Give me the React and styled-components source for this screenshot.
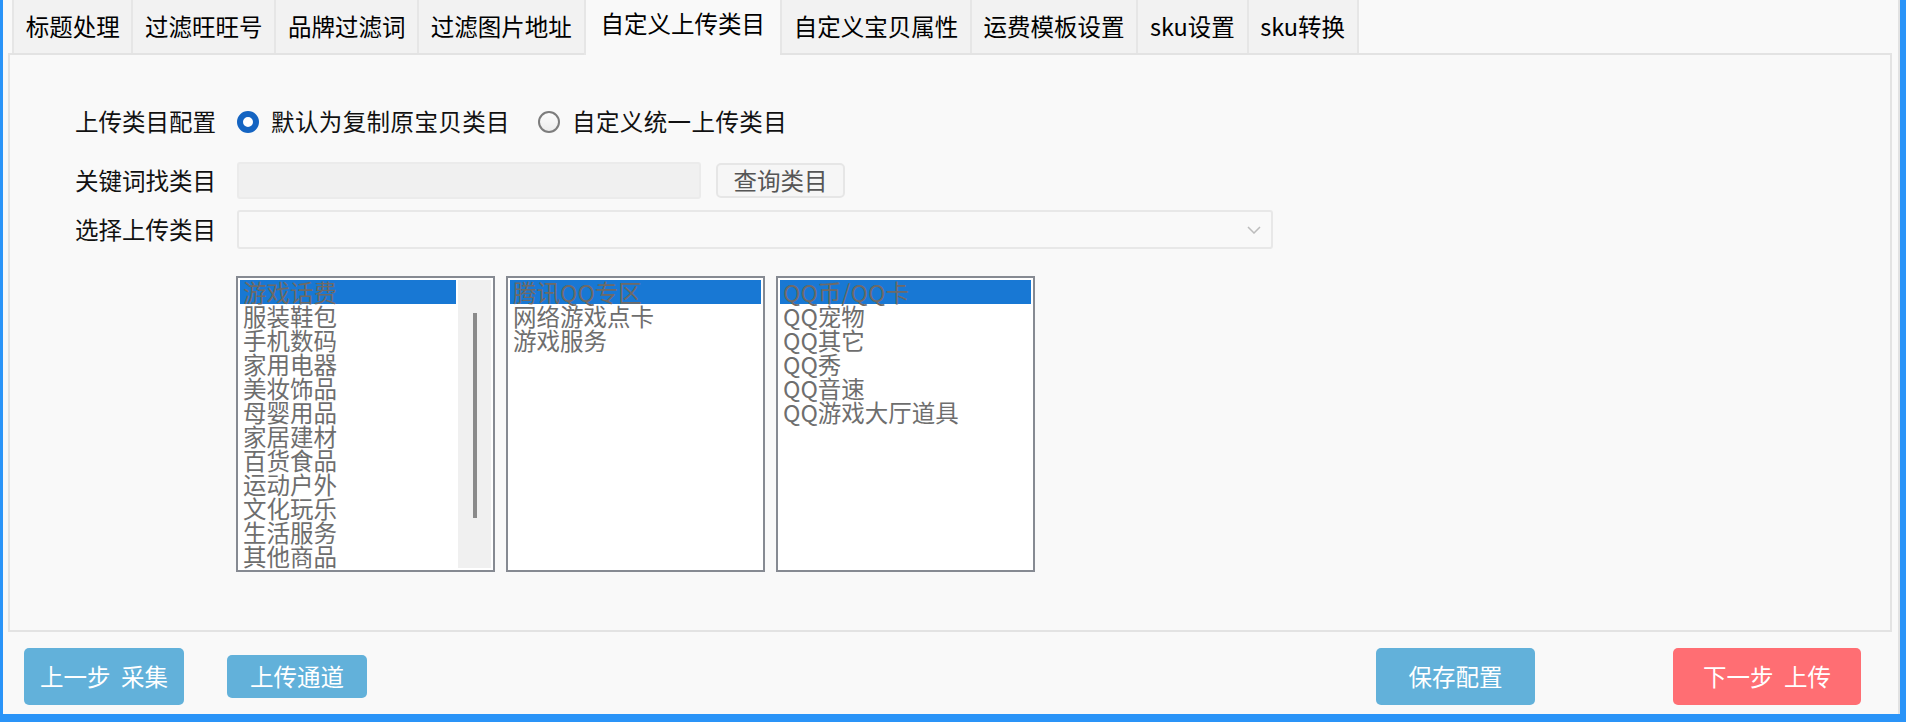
import React from 'react';
import styled, { createGlobalStyle } from 'styled-components';

const GlobalStyle = createGlobalStyle`
  html, body {
    margin: 0;
    padding: 0;
    background: #f9f9f9;
  }
  * {
    box-sizing: border-box;
  }
`;

const tabs = ['标题处理', '过滤旺旺号', '品牌过滤词', '过滤图片地址', '自定义上传类目', '自定义宝贝属性', '运费模板设置', 'sku设置', 'sku转换'];

const lists = [
  { items: ['游戏话费', '服装鞋包', '手机数码', '家用电器', '美妆饰品', '母婴用品', '家居建材', '百货食品', '运动户外', '文化玩乐', '生活服务', '其他商品'], scroll: true },
  { items: ['腾讯QQ专区', '网络游戏点卡', '游戏服务'] },
  { items: ['QQ币/QQ卡', 'QQ宠物', 'QQ其它', 'QQ秀', 'QQ音速', 'QQ游戏大厅道具'] },
];

const Frame = styled.div`
  width: 1906px;
  height: 722px;
  border-left: 3px solid #2a94f8;
  border-right: 6px solid #2a94f8;
  border-bottom: 8px solid #2a94f8;
  background: #f9f9f9;
  font-family: "Noto Sans CJK SC", "Noto Sans", sans-serif;
  font-size: 23.5px;
  color: #111;
`;

const Inner = styled.div`
  height: 100%;
  border-right: 2px solid #e2e2e2;
  display: flex;
  flex-direction: column;
`;

const TabArea = styled.div`
  margin: 0 6px 0 5px;
  display: flex;
  flex-direction: column;
`;

const TabBar = styled.div`
  display: flex;
  align-items: flex-start;
  height: 55px;
  padding-left: 4px;
  border-bottom: 2px solid #e3e3e3;
`;

const Tab = styled.div`
  height: ${p => (p.$active ? '55px' : '53px')};
  padding: 0 ${p => (p.$active ? '15px' : '11.7px')} ${p => (p.$active ? '7px' : '0')};
  display: flex;
  align-items: center;
  background: ${p => (p.$active ? '#f9f9f9' : '#f2f2f2')};
  border-left: 2px solid #e6e6e6;
  white-space: nowrap;
  line-height: 1;
  color: #000;

  &:last-child {
    border-right: 2px solid #e6e6e6;
  }
`;

const Panel = styled.div`
  height: 577px;
  border: 2px solid #e3e3e3;
  border-top: none;
  padding: 52px 0 0 65px;
  display: flex;
  flex-direction: column;
`;

const Row = styled.div`
  display: flex;
  align-items: center;
  height: ${p => p.$h}px;
  margin-bottom: ${p => p.$gap}px;
`;

const Label = styled.div`
  width: 162px;
  flex-shrink: 0;
  line-height: 1;
  color: #111;
`;

const RadioOption = styled.label`
  display: flex;
  align-items: center;
  gap: 12px;
  margin-right: 28px;
  line-height: 1;
  letter-spacing: 0.4px;
`;

const RadioDot = styled.span`
  width: 22px;
  height: 22px;
  border-radius: 50%;
  background: ${p => (p.$on ? '#fff' : 'linear-gradient(#fdfdfd, #ececec)')};
  border: ${p => (p.$on ? '6px solid #1464c2' : '2px solid #7d7d7d')};
`;

const TextInput = styled.div`
  width: 464px;
  height: 37px;
  background: #f0f0f0;
  border: 2px solid #ebebeb;
  border-radius: 3px;
`;

const GreyButton = styled.div`
  margin-left: 15px;
  width: 129px;
  height: 35px;
  display: flex;
  align-items: center;
  justify-content: center;
  background: #f6f6f6;
  border: 2px solid #e6e6e6;
  border-radius: 5px;
  color: #555;
  line-height: 1;
`;

const Select = styled.div`
  width: 1036px;
  height: 39px;
  display: flex;
  align-items: center;
  justify-content: flex-end;
  padding-right: 10px;
  border: 2px solid #e8e8e8;
  border-radius: 3px;
  background: #f9f9f9;
`;

const ListRow = styled.div`
  display: flex;
  gap: 11px;
  padding-left: 161px;
`;

const ListBox = styled.div`
  width: 259px;
  height: 296px;
  border: 2px solid #868a92;
  background: #fff;
  padding: 2px;
  display: flex;
  overflow: hidden;
`;

const Items = styled.div`
  flex: 1;
  display: flex;
  flex-direction: column;
`;

const Item = styled.div`
  height: 24px;
  line-height: 24px;
  padding-left: 3px;
  white-space: nowrap;
  color: ${p => (p.$sel ? '#6f6a66' : '#6e6e6e')};
  background: ${p => (p.$sel ? '#1878d4' : 'transparent')};
`;

const ScrollTrack = styled.div`
  width: 33px;
  margin-left: 2px;
  background: #f0f0f0;
  display: flex;
  justify-content: center;
  padding-top: 33px;
`;

const Thumb = styled.div`
  width: 4px;
  height: 205px;
  background: #8a8a8a;
`;

const Footer = styled.div`
  flex: 1;
  display: flex;
  align-items: center;
  padding: 7px 37px 0 21px;
`;

const ActionButton = styled.div`
  width: ${p => p.$w}px;
  height: ${p => p.$h}px;
  margin-left: ${p => p.$ml || 0}px;
  display: flex;
  align-items: center;
  justify-content: center;
  background: ${p => (p.$red ? '#ff6e73' : '#62b1da')};
  border-radius: 5px;
  color: #fff;
  line-height: 1;
  white-space: pre;
`;

const Spacer = styled.div`
  flex: 1;
`;

const Chevron = () => (
  <svg width="14" height="8" viewBox="0 0 14 8">
    <polyline points="1,1 7,7 13,1" fill="none" stroke="#bcbcbc" strokeWidth="1.5" />
  </svg>
);

export default function App() {
  return (
    <>
      <GlobalStyle />
      <Frame>
        <Inner>
          <TabArea>
            <TabBar>
              {tabs.map(t => (
                <Tab key={t} $active={t === '自定义上传类目'}>{t}</Tab>
              ))}
            </TabBar>
            <Panel>
              <Row $h={30} $gap={25}>
                <Label>上传类目配置</Label>
                <RadioOption>
                  <RadioDot $on />
                  默认为复制原宝贝类目
                </RadioOption>
                <RadioOption>
                  <RadioDot />
                  自定义统一上传类目
                </RadioOption>
              </Row>
              <Row $h={37} $gap={11}>
                <Label>关键词找类目</Label>
                <TextInput />
                <GreyButton>查询类目</GreyButton>
              </Row>
              <Row $h={39} $gap={27}>
                <Label>选择上传类目</Label>
                <Select>
                  <Chevron />
                </Select>
              </Row>
              <ListRow>
                {lists.map((l, i) => (
                  <ListBox key={i}>
                    <Items>
                      {l.items.map((it, j) => (
                        <Item key={it} $sel={j === 0}>{it}</Item>
                      ))}
                    </Items>
                    {l.scroll && (
                      <ScrollTrack>
                        <Thumb />
                      </ScrollTrack>
                    )}
                  </ListBox>
                ))}
              </ListRow>
            </Panel>
          </TabArea>
          <Footer>
            <ActionButton $w={160} $h={57}>上一步  采集</ActionButton>
            <ActionButton $w={140} $h={43} $ml={43}>上传通道</ActionButton>
            <Spacer />
            <ActionButton $w={159} $h={57}>保存配置</ActionButton>
            <ActionButton $w={188} $h={57} $ml={138} $red>下一步  上传</ActionButton>
          </Footer>
        </Inner>
      </Frame>
    </>
  );
}
